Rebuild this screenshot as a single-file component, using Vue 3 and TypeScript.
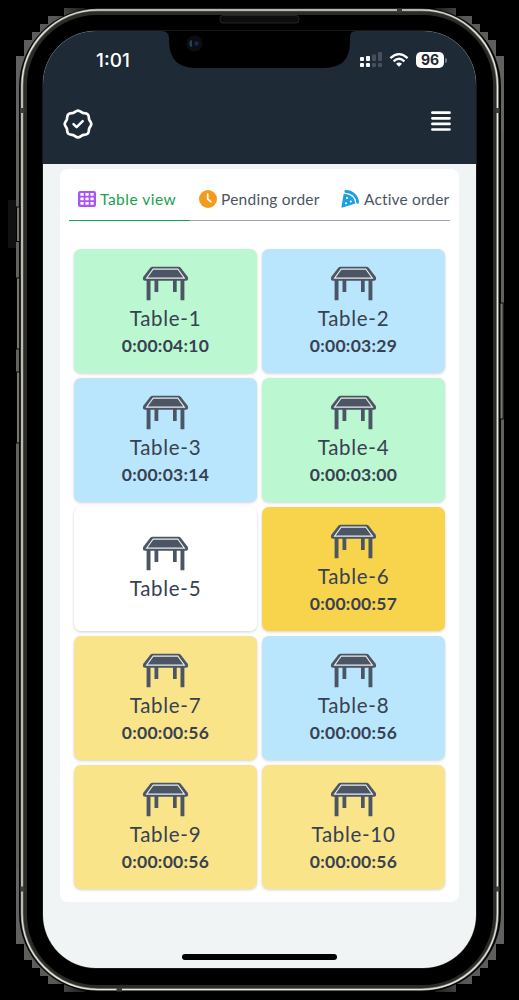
<script setup lang="ts">
interface TableCell {
  name: string
  time?: string
  tone: 'green' | 'blue' | 'white' | 'amber' | 'yellow'
}

const tables: TableCell[] = [
  { name: 'Table-1', time: '0:00:04:10', tone: 'green' },
  { name: 'Table-2', time: '0:00:03:29', tone: 'blue' },
  { name: 'Table-3', time: '0:00:03:14', tone: 'blue' },
  { name: 'Table-4', time: '0:00:03:00', tone: 'green' },
  { name: 'Table-5', tone: 'white' },
  { name: 'Table-6', time: '0:00:00:57', tone: 'amber' },
  { name: 'Table-7', time: '0:00:00:56', tone: 'yellow' },
  { name: 'Table-8', time: '0:00:00:56', tone: 'blue' },
  { name: 'Table-9', time: '0:00:00:56', tone: 'yellow' },
  { name: 'Table-10', time: '0:00:00:56', tone: 'yellow' },
]

const corners = ['', 'translate(520 0) scale(-1 1)', 'translate(0 1000) scale(1 -1)', 'translate(520 1000) scale(-1 -1)']
</script>

<template>
  <div class="stage">
    <svg class="frame" width="519" height="1000" viewBox="0 0 519 1000">
      <defs>
        <linearGradient id="edge" x1="0" y1="1" x2="1" y2="0">
          <stop offset="0" stop-color="#666664" />
          <stop offset="0.75" stop-color="#585856" />
          <stop offset="1" stop-color="#1c1c1c" />
        </linearGradient>
      </defs>
      <!-- stepped outer edge, one quadrant mirrored four times -->
      <path
        v-for="c in corners"
        :key="c"
        :transform="c"
        d="M85 8H64V16H48V24H40V32H32V40H24V56H16V130H80Z"
        fill="url(#edge)"
      />
      <path d="M16 130H19V870H16ZM501 130H504V870H501Z" fill="#62625f" />
      <rect x="19" y="8" width="482" height="984" rx="79" fill="#050505" />
      <rect x="22" y="10" width="475.5" height="979.5" rx="76" fill="#2c2b28" stroke="#85857e" stroke-width="2.6" />
      <rect x="22" y="10" width="475.5" height="979.5" rx="76" fill="none" stroke="#e9e8e1" stroke-width="1.1" />
      <rect x="27" y="15" width="466" height="970" rx="70" fill="#000" />
      <!-- antenna bands -->
      <path d="M20 108h4.500v5h-4.500zM495.500 108h4v5h-4zM20 886.500h4.500v5h-4.500zM495.500 886.500h4v5h-4zM397 8.500h5v4h-5zM116.500 987.500h5.500v4h-5.500z" fill="#3b3b38" />
      <!-- side buttons -->
      <rect x="8" y="200" width="8" height="48" fill="#111" />
      <g fill="#77776f" stroke="#050505" stroke-width="1">
        <rect x="16.500" y="207" width="3.200" height="34.500" />
        <rect x="16.500" y="278" width="3.200" height="71" />
        <rect x="16.500" y="372" width="3.200" height="71" />
        <rect x="500" y="303" width="3.200" height="116" />
      </g>
      <rect x="220" y="15.500" width="79" height="7.500" rx="3" fill="#0d0d0d" stroke="#252525" stroke-width="1" />
    </svg>

    <main class="screen">
      <header class="top">
        <div class="status">
          <span class="clock">1:01</span>
          <div class="signals">
            <svg width="22" height="16" viewBox="0 0 22 16">
              <g fill="#fff">
                <rect x="0" y="5" width="4" height="4" rx="1" /><rect x="6" y="4" width="4" height="5" rx="1" />
                <rect x="0" y="11" width="4" height="4" rx="1" /><rect x="6" y="11" width="4" height="4" rx="1" />
              </g>
              <g fill="#46515d">
                <rect x="12" y="2.500" width="4" height="6.500" rx="1" /><rect x="18" y="0" width="4" height="9" rx="1" />
                <rect x="12" y="11" width="4" height="4" rx="1" /><rect x="18" y="11" width="4" height="4" rx="1" />
              </g>
            </svg>
            <svg class="wifi" width="20" height="16" viewBox="0 0 20 16">
              <g fill="none" stroke="#fff" stroke-width="2.300">
                <path d="M1.400 6.200Q10-1.900 18.600 6.200" /><path d="M4.600 9.300Q10 4.200 15.400 9.300" />
              </g>
              <path d="M7 11.700Q10 9.200 13 11.700L10 14.800Z" fill="#fff" />
            </svg>
            <span class="battery">96</span>
            <i class="cap"></i>
          </div>
        </div>
        <div class="bar">
          <svg width="30" height="30" viewBox="0 0 30 30" fill="none" stroke="#fff" stroke-linecap="round" stroke-linejoin="round">
            <path stroke-width="2.700" d="M15 1.700C17 1.700 18.300 3.500 19.700 3.900C21.300 4.200 23.500 4 24.700 5.300C26 6.500 25.800 8.700 26.100 10.300C26.500 11.700 28.300 13 28.300 15C28.300 17 26.500 18.300 26.100 19.700C25.800 21.300 26 23.500 24.700 24.700C23.500 26 21.300 25.800 19.700 26.100C18.300 26.500 17 28.300 15 28.300C13 28.300 11.700 26.500 10.300 26.100C8.700 25.800 6.500 26 5.300 24.700C4 23.500 4.200 21.300 3.900 19.700C3.500 18.300 1.700 17 1.700 15C1.700 13 3.500 11.700 3.900 10.300C4.200 8.700 4 6.500 5.300 5.300C6.500 4 8.700 4.200 10.300 3.900C11.700 3.500 13 1.700 15 1.700Z" />
            <path stroke-width="2.500" d="M10.500 15.200L13.600 18.200L19.700 12.100" />
          </svg>
          <svg width="20" height="21" viewBox="0 0 20 21" stroke="#fff" stroke-width="2.700" stroke-linecap="round">
            <path d="M1.400 1.700H18.500M1.400 7.300H18.500M1.400 12.900H18.500M1.400 18.500H18.500" />
          </svg>
        </div>
        <svg class="notch" width="194" height="38" viewBox="0 0 194 38">
          <path d="M0 0Q7 0 7 8V11Q8 37 33 37H162Q188 37 188 11V6Q188 0 194 0Z" fill="#000" />
          <circle cx="32.500" cy="12.500" r="8" fill="#0c0d10" />
          <path d="M29.500 9.500Q27.500 12.500 29.500 15.500" fill="none" stroke="#254b50" stroke-width="2" />
          <circle cx="34.500" cy="12.500" r="2.200" fill="#142a59" />
        </svg>
      </header>

      <section class="panel">
        <nav class="tabs">
          <div class="tab active">
            <svg width="18" height="16" viewBox="0 0 18 16">
              <rect width="18" height="16" rx="2" fill="#a855f7" />
              <g fill="#fff">
                <template v-for="y in 3" :key="y">
                  <rect v-for="x in 3" :key="x" :x="x * 5 - 2.600" :y="y * 4.500 - 2.500" width="3.300" height="2.700" rx=".4" />
                </template>
              </g>
            </svg>
            <span class="t1">Table view</span>
          </div>
          <div class="tab pending">
            <svg width="18" height="18" viewBox="0 0 18 18">
              <circle cx="9" cy="9" r="9" fill="#f29b1c" />
              <path d="M8.700 4V9L12 11.800" fill="none" stroke="#fff" stroke-width="1.700" stroke-linecap="round" />
            </svg>
            <span class="t2">Pending order</span>
          </div>
          <div class="tab orders">
            <svg width="18" height="18" viewBox="0 0 18 18">
              <path d="M4.800 1.500C11 1.500 16.300 6 16.600 12.300" fill="none" stroke="#1e9ee3" stroke-width="2.800" stroke-linecap="round" />
              <path d="M3.600 3.700C9.700 3.700 14 8 14.500 13.400L1.700 17.600Q.3 17.900.5 16.400L2.500 4.700Q2.700 3.700 3.600 3.700Z" fill="#1e9ee3" />
              <path d="M3.800 3.600C9.500 3.600 14 7.500 14.600 12.900" fill="none" stroke="#fff" stroke-width=".8" />
              <g fill="#fff"><circle cx="6" cy="8" r="1.100" /><circle cx="9.800" cy="11.500" r="1.100" /><circle cx="5" cy="13.300" r="1.100" /></g>
            </svg>
            <span class="t3">Active order</span>
          </div>
        </nav>

        <div class="grid">
          <article v-for="t in tables" :key="t.name" class="cell" :class="t.tone">
            <svg width="46" height="36" viewBox="0 0 46 36">
              <path d="M10 .8H36Q37.300.8 38.200 1.800L45 10.600Q46.800 14.800 43.500 14.800H2.500Q-.8 14.800 1 10.600L7.800 1.800Q8.700.8 10 .8Z" fill="#4b5563" />
              <path d="M10.700 3H35.300L41.800 12H4.200Z" fill="#4b5563" stroke="#e9eef0" stroke-width="1.250" />
              <path d="M4.100 14H8V34.300H4.100ZM38 14H41.900V34.300H38ZM12 14H15.800V26H12ZM30.500 14H34.200V26H30.500Z" fill="#4b5563" />
            </svg>
            <div class="name">{{ t.name }}</div>
            <div v-if="t.time" class="time">{{ t.time }}</div>
          </article>
        </div>
      </section>
      <div class="home"></div>
    </main>
  </div>
</template>

<style>
body { background: #000; }
</style>

<style scoped>
.stage {
  position: relative;
  box-sizing: border-box;
  width: 519px;
  height: 1000px;
  padding: 31px 43px 32px;
  overflow: hidden;
  background: #000;
  font-family: Lato, "Open Sans", sans-serif;
}
svg { display: block; flex: none; }
.frame { position: absolute; left: 0; top: 0; }
.screen {
  position: relative;
  display: flex;
  flex-direction: column;
  align-items: center;
  width: 433px;
  height: 937px;
  overflow: hidden;
  border-radius: 53px;
  background: #f1f4f5;
  box-shadow: 0 0 0 0.5px #333;
}
.top {
  position: relative;
  flex: none;
  box-sizing: border-box;
  width: 100%;
  height: 133px;
  background: #1f2a37;
}
.notch { position: absolute; left: 119px; top: 0; }
.status {
  display: flex;
  justify-content: space-between;
  height: 60px;
  padding: 0 29px 0 53px;
}
.clock {
  margin-top: 18px;
  color: #fff;
  font: 500 19px/24px Inter, sans-serif;
}
.signals { display: flex; align-items: flex-start; padding-top: 21px; }
.wifi { margin-left: 7px; }
.battery {
  width: 28px;
  height: 16px;
  margin-left: 7px;
  border-radius: 5px;
  background: #fff;
  color: #1f2937;
  font: 700 14px/16px Inter, sans-serif;
  text-align: center;
}
.cap { width: 2px; height: 5px; margin: 6px 0 0 1px; border-radius: 0 2px 2px 0; background: #727b85; }
.bar {
  display: flex;
  justify-content: space-between;
  align-items: center;
  height: 66px;
  padding: 0 25px 0 20px;
}
.bar svg:last-child { margin-bottom: 6px; }
.panel {
  flex: none;
  box-sizing: border-box;
  width: 399px;
  height: 733px;
  margin-top: 5px;
  padding: 0 9px;
  border-radius: 8px;
  background: #fff;
}
.tabs {
  display: flex;
  box-sizing: border-box;
  width: 381px;
  height: 52px;
  padding-top: 8px;
  border-bottom: 1px solid #9ca3af;
}
.tab {
  display: flex;
  align-items: center;
  box-sizing: border-box;
  height: 44px;
  gap: 4px;
  white-space: nowrap;
  color: #4b5563;
  font-size: 15.500px;
}
.active { width: 121px; padding-left: 9px; color: #16a34a; border-bottom: 1px solid #16a34a; }
.pending { width: 143px; padding-left: 9px; }
.orders { padding-left: 9px; }
.orders svg { margin: 0 1px 0 -1px; }
.t1 { letter-spacing: 0.5px; }
.t2 { letter-spacing: 0.25px; }
.t3 { letter-spacing: 0.15px; }
.grid {
  display: grid;
  grid-template-columns: 183px 183px;
  grid-auto-rows: 124px;
  gap: 5px;
  padding: 28px 5px 0;
}
.cell {
  display: flex;
  flex-direction: column;
  align-items: center;
  justify-content: center;
  border-radius: 7px;
  color: #374151;
  box-shadow: 0 1px 3px rgb(0 0 0 / 18%);
}
.green { background: #bbf7d0; }
.blue { background: #bae6fd; }
.white { background: #fff; }
.amber { background: #f8d34c; }
.yellow { background: #fae48a; }
.cell svg { width: 47px; height: 36px; margin: 3px 1px 0 0; }
.cell.white svg { margin-top: -1px; }
.name { margin-top: 2px; font-size: 20.500px; line-height: 28px; letter-spacing: 0.7px; }
.time { font-size: 17.500px; font-weight: 700; line-height: 28px; letter-spacing: 0.3px; }
.home {
  flex: none;
  width: 155px;
  height: 6px;
  margin-top: 52px;
  border-radius: 3px;
  background: #000;
}
</style>
